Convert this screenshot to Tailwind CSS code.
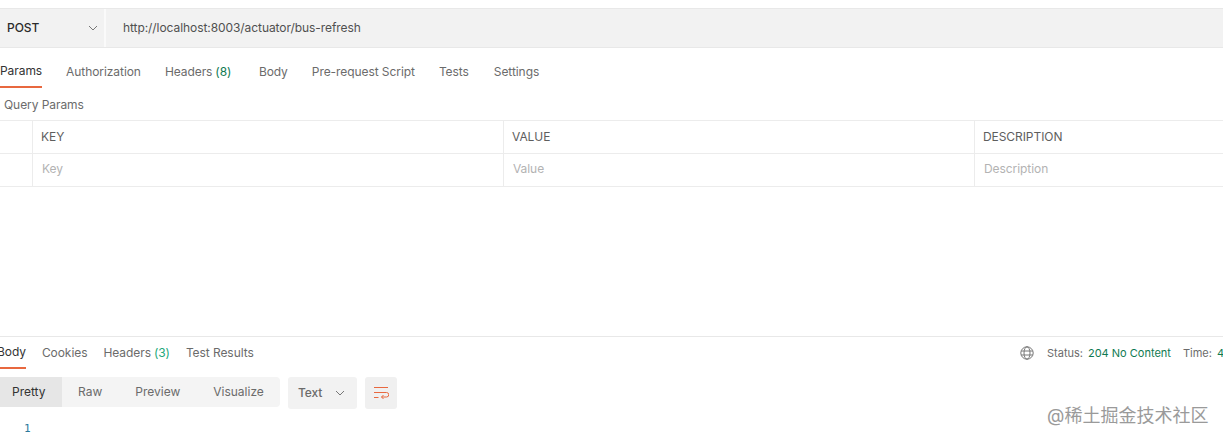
<!DOCTYPE html>
<html lang="en">
<head>
  <meta charset="UTF-8">
  <title>Postman request</title>
  <script src="https://cdn.jsdelivr.net/npm/@tailwindcss/browser@4"></script>
</head>
<body class="relative h-[442px] w-[1223px] overflow-hidden bg-white font-['Inter','Noto_Sans_CJK_SC',sans-serif] text-[12px] tracking-[-0.07px] text-[#6b6b6b]">

  <!-- Request bar -->
  <div class="mt-2 flex h-[40px] border-y border-[#e8e8e8] bg-[#f2f2f2]">
    <div class="flex w-[104px] items-center justify-between pl-[7px] pr-[4px] font-medium text-[#2b2b2b]">
      <span>POST</span>
      <svg class="mr-[1px]" width="12" height="12" viewBox="0 0 12 12" fill="none" stroke="#777" stroke-width="1"><path d="M2 4l4 4 4-4"/></svg>
    </div>
    <div class="w-[2px] bg-[#fafafa]"></div>
    <div class="flex flex-1 items-center pl-[17px] text-[#505050]">http://localhost:8003/actuator/bus-refresh</div>
  </div>

  <!-- Request tabs -->
  <div class="flex h-[40px] gap-[24px]">
    <div class="flex h-[40px] items-center border-b-2 border-[#e8683f] pt-[8px] text-[#333]">Params</div>
    <div class="flex items-center pt-[8px]">Authorization</div>
    <div class="flex w-[70px] items-center gap-[3px] whitespace-nowrap pt-[8px]">Headers <span class="text-[#0f7a52]">(8)</span></div>
    <div class="flex items-center pt-[8px]">Body</div>
    <div class="flex items-center pt-[8px]">Pre-request Script</div>
    <div class="flex items-center pt-[8px]">Tests</div>
    <div class="ml-[1px] flex items-center pt-[8px]">Settings</div>
  </div>

  <!-- Query params table -->
  <div class="flex h-[32px] items-center pl-[4px] pt-[2px] text-[#6b6b6b]">Query Params</div>
  <div class="grid grid-cols-[33px_471px_471px_1fr] border-y border-[#ececec]">
    <div class="h-[33px] border-b border-r border-[#ececec]"></div>
    <div class="flex items-center border-b border-r border-[#ececec] pl-[8px] text-[#5e5e5e]">KEY</div>
    <div class="flex items-center border-b border-r border-[#ececec] pl-[8px] text-[#5e5e5e]">VALUE</div>
    <div class="flex items-center border-b border-[#ececec] pl-[8px] text-[#5e5e5e]">DESCRIPTION</div>
    <div class="h-[32px] border-r border-[#ececec]"></div>
    <div class="flex items-center border-r border-[#ececec] pb-[2px] pl-[9px] text-[#b3b3b3]">Key</div>
    <div class="flex items-center border-r border-[#ececec] pb-[2px] pl-[9px] text-[#b3b3b3]">Value</div>
    <div class="flex items-center pb-[2px] pl-[9px] text-[#b3b3b3]">Description</div>
  </div>

  <!-- Response -->
  <div class="mt-[149px] border-t border-[#e8e8e8]">
    <div class="flex h-[32px] items-stretch justify-between">
      <div class="flex gap-[16px]">
        <div class="ml-[-3px] flex items-center border-b-2 border-[#e8683f] text-[#333]">Body</div>
        <div class="flex items-center">Cookies</div>
        <div class="flex items-center gap-[3px]">Headers <span class="text-[#22a87a]">(3)</span></div>
        <div class="flex items-center">Test Results</div>
      </div>
      <div class="flex w-[203px] shrink-0 items-center overflow-hidden whitespace-nowrap text-[11px] tracking-normal">
        <svg class="mr-[13px] shrink-0" width="14" height="14" viewBox="0 0 14 14" fill="none" stroke="#777" stroke-width="1"><circle cx="7" cy="7" r="6.2"/><ellipse cx="7" cy="7" rx="3" ry="6.2"/><path d="M1.2 5h11.6M1.2 9h11.6"/></svg>
        <span>Status:</span>
        <span class="ml-[5px] text-[#0f7a52]">204 No Content</span>
        <span class="ml-[12px]">Time:</span>
        <span class="ml-[5px] text-[#0f7a52]">4</span>
      </div>
    </div>

    <div class="mt-[8px] flex items-start">
      <div class="flex h-[30px] w-[280px] items-center rounded-r-[4px] bg-[#f4f4f4] tracking-normal">
        <div class="flex h-full w-[62px] items-center bg-[#e6e6e6] pl-[12px] text-[#333]">Pretty</div>
        <div class="ml-[16px]">Raw</div>
        <div class="ml-[33px]">Preview</div>
        <div class="ml-[33px]">Visualize</div>
      </div>
      <div class="ml-[8px] flex h-[32px] w-[69px] items-center justify-between rounded-[3px] bg-[#f2f2f2] pl-[10px] pr-[12px] font-medium">
        <span>Text</span>
        <svg width="10" height="10" viewBox="0 0 10 10" fill="none" stroke="#777" stroke-width="1"><path d="M1 3l4 4 4-4"/></svg>
      </div>
      <div class="ml-[8px] flex h-[32px] w-[32px] items-center justify-center rounded-[3px] bg-[#f0f0f0]">
        <svg width="16" height="16" viewBox="0 0 16 16" fill="none" stroke="#e8683f" stroke-width="1"><path d="M1 2.500h14M1 7.500h12.500a1.800 1.800 0 0 1 0 4.500H8.500M10.500 10l-2 2 2 2M1 12.500h4.500"/></svg>
      </div>
    </div>

    <div class="mt-[13px] pl-[24px] font-['DejaVu_Sans_Mono',monospace] text-[11px] leading-[14px] text-[#2d7a9c]">1</div>
  </div>

  <!-- Watermark -->
  <div class="absolute left-[1047px] top-[405px] text-[18px] leading-[22px] tracking-normal text-[#9a9a9a]">@稀土掘金技术社区</div>
</body>
</html>
